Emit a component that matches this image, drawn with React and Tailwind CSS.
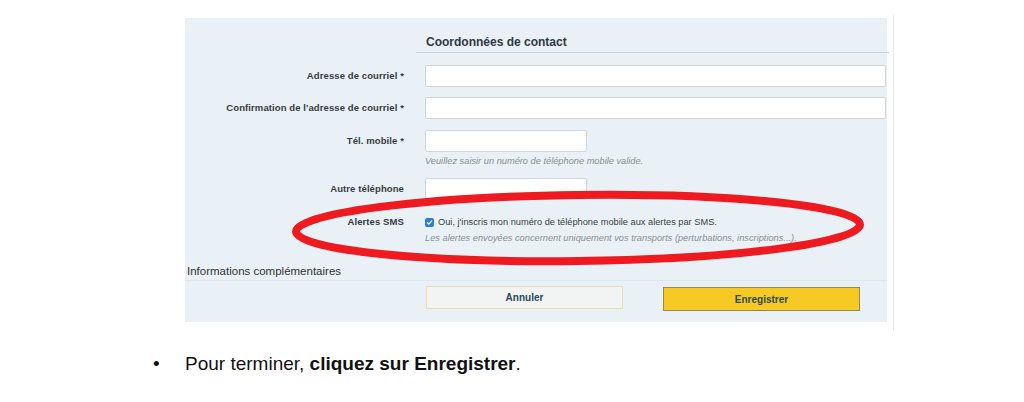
import React from "react";

const F = { fontFamily: '"Liberation Sans", Arial, sans-serif' };

function Label({ children }) {
  return (
    <div className="w-[219px] shrink-0 text-right text-[9.5px] font-bold leading-[12px] text-[#383c40] tracking-[0.1px]">
      {children}
    </div>
  );
}

function Input({ w }) {
  return <div className={`h-[22px] ${w} bg-white border border-[#cfd7df] rounded-[2px]`} />;
}

export default function App() {
  return (
    <div className="relative w-[1024px] h-[402px] bg-white overflow-hidden" style={F}>
      <div className="flex ml-[185px] pt-[15px]">
        <div className="mt-[3px] w-[702px] h-[304px] bg-[#e9f0f6] flex flex-col">
          {/* header */}
          <div className="ml-[231px] w-[473px] h-[35px] pt-[17px] pl-[10px] border-b border-[#c9d1d9] text-[12px] leading-[14px] font-bold text-[#2f3a44]">
            Coordonnées de contact
          </div>

          <div className="mt-[12px] flex items-center">
            <Label>Adresse de courriel *</Label>
            <div className="ml-[21px]"><Input w="w-[461px]" /></div>
          </div>
          <div className="mt-[10px] flex items-center">
            <Label>Confirmation de l'adresse de courriel *</Label>
            <div className="ml-[21px]"><Input w="w-[461px]" /></div>
          </div>
          <div className="mt-[11px] flex items-center">
            <Label>Tél. mobile *</Label>
            <div className="ml-[21px]"><Input w="w-[162px]" /></div>
          </div>
          <div className="mt-[3px] ml-[240px] text-[9.25px] leading-[12px] italic text-[#8a8f94]">
            Veuillez saisir un numéro de téléphone mobile valide.
          </div>
          <div className="mt-[11px] flex items-center">
            <Label>Autre téléphone</Label>
            <div className="ml-[21px]"><Input w="w-[162px]" /></div>
          </div>
          <div className="mt-[16px] flex items-center">
            <Label>Alertes SMS</Label>
            <div className="ml-[21px] flex items-center">
              <span className="w-[9px] h-[9px] rounded-[2px] bg-[#2c7bd3] flex items-center justify-center">
                <svg width="7" height="7" viewBox="0 0 10 10">
                  <path d="M2 5.2 L4.2 7.4 L8.2 2.8" fill="none" stroke="white" strokeWidth="1.8" strokeLinecap="round" strokeLinejoin="round" />
                </svg>
              </span>
              <span className="ml-[4px] text-[9.25px] leading-[12px] text-[#3a3f44]">
                Oui, j'inscris mon numéro de téléphone mobile aux alertes par SMS.
              </span>
            </div>
          </div>
          <div className="mt-[4px] ml-[240px] text-[9.25px] leading-[12px] italic text-[#8a8f94]">
            Les alertes envoyées concernent uniquement vos transports (perturbations, inscriptions...).
          </div>

          <div className="mt-[20px] ml-[2px] text-[11.5px] leading-[14px] text-[#333]">
            Informations complémentaires
          </div>
          <div className="mt-[2px] border-t border-[#dfe6ec]" />
          <div className="mt-[5px] ml-[241px] flex items-start">
            <div className="w-[197px] h-[23px] bg-[#f1f4f3] border border-[#eadfa8] flex items-center justify-center text-[10px] font-bold text-[#2a4a5e]">
              Annuler
            </div>
            <div className="ml-[40px] mt-[1px] w-[197px] h-[24px] bg-[#f6c924] border border-[#8f8a5c] flex items-center justify-center text-[10px] font-bold text-[#2f4a4a]">
              Enregistrer
            </div>
          </div>
        </div>
        <div className="ml-[6px] w-px h-[315px] bg-[#e8e8e8]" />
      </div>

      <div className="mt-[23px] flex items-center text-[19px] leading-[22px] text-[#111]">
        <span className="ml-[153px] w-[32px]">•</span>
        <span>
          Pour terminer, <b>cliquez sur Enregistrer</b>.
        </span>
      </div>

      <svg className="absolute left-0 top-0 pointer-events-none" width="1024" height="402">
        <ellipse cx="578" cy="228" rx="282" ry="33" fill="none" stroke="#ee1a1f" strokeWidth="8" transform="rotate(-0.7 578 228)" />
      </svg>
    </div>
  );
}
